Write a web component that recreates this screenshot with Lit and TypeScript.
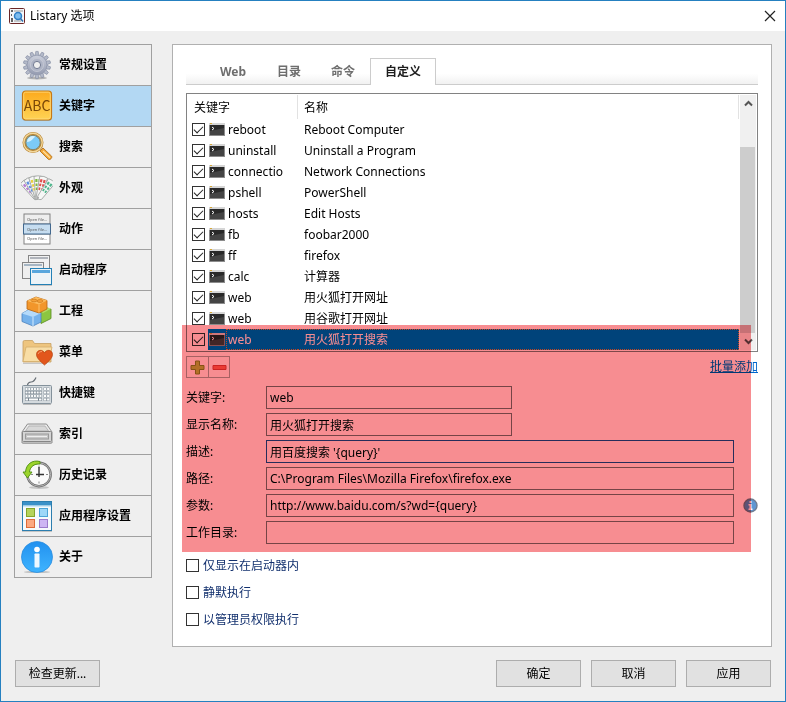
import { LitElement, html, css, svg, nothing, type TemplateResult } from "lit";
import { customElement, property, state } from "lit/decorators.js";
import { classMap } from "lit/directives/class-map.js";

const gearTeeth = Array.from({ length: 14 }, (_, i) => (i * 360) / 14);

const icons: Record<string, TemplateResult> = {
  gear: svg`
    <defs><linearGradient id="g" x1="0" y1="0" x2="0" y2="1"><stop offset="0" stop-color="#ccd0dc"/><stop offset="1" stop-color="#949bb0"/></linearGradient></defs>
    <ellipse cx="16" cy="29" rx="10" ry="1.5" fill="#888" opacity=".6"/>
    ${gearTeeth.map((a) => svg`<path d="M14.8 2.400h2.400l.7 4h-3.800z" fill="#b4bac9" stroke="#8189a0" stroke-width=".6" transform="rotate(${a} 16 16)"/>`)}
    <circle cx="16" cy="16" r="9.800" fill="url(#g)" stroke="#8f96ab" stroke-width=".6"/>
    <circle cx="16" cy="16" r="6.5" fill="#adb3c4" stroke="#c9ccd7" stroke-width=".8"/>
    <circle cx="16" cy="16" r="3.600" fill="#efefef" stroke="#747c93" stroke-width="1"/>`,
  abc: svg`
    <defs><linearGradient id="a" x1="0" y1="0" x2="0" y2="1"><stop offset="0" stop-color="#fca91c"/><stop offset="1" stop-color="#ffd455"/></linearGradient></defs>
    <rect x="1.5" y="2" width="29" height="29" rx="3" fill="#7d96aa" opacity=".6"/>
    <rect x="1.5" y="1" width="29" height="29" rx="3" fill="url(#a)" stroke="#c67a17" stroke-width="1.2"/>
    <rect x="2.7" y="2.2" width="26.6" height="26.6" rx="2" fill="none" stroke="#ffd97c" stroke-width=".8"/>
    <text x="16" y="21" text-anchor="middle" class="abc">ABC</text>`,
  search: svg`
    <path d="M19 20l3-3 8.6 8.2c1 1.4-1.6 4.2-3.2 3.2z" fill="#f3a737" stroke="#b2731d" stroke-width=".9"/>
    <path d="M22 20l7 6.8" stroke="#ffe0a0" stroke-width="1.2"/>
    <circle cx="12" cy="11.5" r="9" fill="#8fd3fa" stroke="#b88534" stroke-width="3"/>
    <circle cx="12" cy="11.5" r="9.2" fill="none" stroke="#f3d79a" stroke-width="1.4"/>
    <circle cx="12" cy="11.5" r="7.2" fill="#7ccaf7" stroke="#86703f" stroke-width=".8"/>
    <path d="M6 11a6 6 0 0 1 8.500-5.400C12 7 11 11 6 11z" fill="#d4f1ff"/>`,
  look: svg`
    ${[
      [-38, "#b77bd6"],
      [-26, "#5d8fe0"],
      [-13, "#e9cf3c"],
      [0, "#7fb93e"],
      [14, "#e0504e"],
      [36, "#4fb58c"],
    ].map(
      ([a, c]) => svg`<g transform="rotate(${a} 17 28)">
        <path d="M13 4.500q4-1.500 8 0l-1.500 21q-2.500 3-5 0z" fill="#f6f7f6" stroke="#9da19f" stroke-width=".8"/>
        <path d="M14.300 7h2.200v3h-2.200zM17.500 7h2.200v3h-2.200zM14.500 11.500h2v2.500h-2zM17.500 11.500h2v2.500h-2zM14.800 15.500h1.700v2.500h-1.700zM17.500 15.500h1.700v2.500h-1.700z" fill="${c}"/></g>`,
    )}
    <circle cx="17" cy="25.500" r="1" fill="#aaa"/>`,
  action: svg`
    <rect x="3" y="1" width="26" height="10" fill="#eee" stroke="#828282"/>
    <rect x="3" y="21" width="26" height="10" fill="#fff" stroke="#828282"/>
    <rect x="2.500" y="11" width="27" height="10" fill="#c6ddf0" stroke="#42688e"/>
    ${[8, 18, 27].map((y) => svg`<text x="6" y="${y}" class="tiny">Open file…</text>`)}`,
  launcher: svg`
    <rect x="7.500" y="1.500" width="21" height="16" fill="#f1f1f1" stroke="#858585"/><path d="M9 3h18v2H9z" fill="#b0b4bb"/>
    <rect x="1.500" y="8.500" width="21" height="16" fill="#eee" stroke="#858585"/><path d="M3 10h18v2H3z" fill="#a6b6c4"/>
    <rect x="9.500" y="14.500" width="21" height="16" fill="#edf3f7" stroke="#2380b6"/><path d="M11 16h18v3H11z" fill="#58a6dd"/>
    <path d="M9 31.500h22" stroke="#999" opacity=".5"/>`,
  bricks: svg`
    <path d="M19 17l11-3v9.500l-10 5z" fill="#8cc641" stroke="#558c1d" stroke-width=".8"/><path d="M17 14l7-3 6 3-8 4z" fill="#b2db66"/>
    <path d="M1 18.500l7-4 12 3.500v9l-8 4-11-4.500z" fill="#76b2eb" stroke="#4b82be" stroke-width=".8"/>
    <path d="M1 18.500l7-4 12 3.500-8 4z" fill="#b5dafa"/><path d="M12 22v9" stroke="#d4eafd"/>
    <path d="M6 6l9-4 11 3.500v8.500l-8 4-12-4z" fill="#f2962b" stroke="#b96612" stroke-width=".8"/>
    <path d="M6 6l9-4 11 3.500-8 4z" fill="#fdbd5f"/><path d="M18 9.500v8" stroke="#fbc271"/>
    <ellipse cx="13" cy="5.500" rx="3" ry="1.400" fill="#f7a23a" stroke="#c87518" stroke-width=".7"/><ellipse cx="19" cy="6" rx="3" ry="1.400" fill="#f7a23a" stroke="#c87518" stroke-width=".7"/>`,
  menu: svg`
    <path d="M2 26V6q0-1.500 1.500-1.500h8l2 3H30V26z" fill="#eec57f" stroke="#c6a062" stroke-width=".8"/>
    <path d="M5 11h26l-3 14.500H2z" fill="#f8dda5" stroke="#d3ad6c" stroke-width=".8"/><path d="M2 27.500h24" stroke="#aaa" opacity=".6"/>
    <path d="M23.500 29C19 25 15.500 22 15.500 18.500c0-5 6.500-5.500 8-1.500 1.500-4 8-3.500 8 1.500 0 3.500-3.500 6.500-8 10.500z" fill="#e2561c" stroke="#b5420f" stroke-width=".7"/>
    <path d="M17 18q1-3 4-2.500" stroke="#f79a68" fill="none"/>`,
  keyboard: svg`
    <path d="M6.500 8q.500-3 3.500-3t5-4.500" fill="none" stroke="#666d74" stroke-width="1.200"/>
    <path d="M2 27.500h28" stroke="#999" opacity=".6"/>
    <rect x="1.500" y="8.500" width="29" height="18" rx="1" fill="#d4dade" stroke="#84919b"/>
    <path d="M4 12h17M4 15.500h17M4 19h17M4 22.500h17" stroke="#7d8993" stroke-width="2.800"/>
    <path d="M4.500 12h16M4.500 15.500h16M4.500 19h16" stroke="#fbfcfc" stroke-width="2" stroke-dasharray="2 .800"/>
    <path d="M4.500 22.500h2.500M8 22.500h9M18 22.500h2.500" stroke="#fbfcfc" stroke-width="2"/>
    <path d="M22.500 12h6M22.500 15.500h6M22.500 19h6M22.500 22.500h6" stroke="#8f9aa3" stroke-width="2.800"/>
    <path d="M23 12h5.500M23 15.500h5.500M23 19h5.500M23 22.500h5.500" stroke="#fbfcfc" stroke-width="1.900" stroke-dasharray="2.200 .900"/>`,
  drive: svg`
    <path d="M6.500 6h19L31 14v11H1V14z" fill="#e9e9e9" stroke="#8e8e8e"/>
    <path d="M8 8h16l3.500 5h-23z" fill="#d8d8d8" stroke="#a5a5a5" stroke-width=".700"/>
    <rect x="1.500" y="13.500" width="29" height="10" rx="1" fill="#d5d5d5" stroke="#858585"/>
    <rect x="4.500" y="16" width="23" height="5" fill="#c7c7c7" stroke="#9a9a9a"/><path d="M6 18.500h20" stroke="#eee"/>
    <path d="M2 25.500h28" stroke="#999" opacity=".6"/>`,
  history: svg`
    <ellipse cx="18" cy="28.500" rx="10" ry="1.500" fill="#999" opacity=".5"/>
    <circle cx="18" cy="15.500" r="11.700" fill="#fafafa" stroke="#6f6f6f" stroke-width="2.400"/>
    <circle cx="18" cy="15.500" r="11.700" fill="none" stroke="#b9b9b9" stroke-width=".900"/>
    <path d="M18 6.500v2M18 22.500v2M25 15.500h2M10 15.500h2" stroke="#888"/>
    <path d="M18 8v10M15 15.500h8" stroke="#333" stroke-width="1.400"/>
    <path d="M19 2.500C11 .500 5 5.500 4.500 13H2l4.500 6 4.500-6H8.500C9 8 13 4.500 19 5z" fill="#9cd42c" stroke="#4f8e12" stroke-width=".900"/>`,
  apps: svg`
    <rect x="1.500" y="1.500" width="29" height="29" fill="#f6fafc" stroke="#2c7eaf"/>
    <path d="M2 2h28v3.500H2z" fill="#3b91c8"/><path d="M2 6h28" stroke="#a9d3eb"/>
    <rect x="5.500" y="8.500" width="8" height="8" fill="#b5d35b" stroke="#86a52b"/>
    <rect x="18.500" y="8.500" width="8" height="8" fill="#9dd7f8" stroke="#4ca4d7"/>
    <rect x="5.500" y="19.500" width="8" height="8" fill="#fca981" stroke="#de6c39"/>
    <rect x="18.500" y="19.500" width="8" height="8" fill="#cdb6f3" stroke="#9b7bcb"/>
    <path d="M1 31.500h30" stroke="#999" opacity=".5"/>`,
  about: svg`
    <defs><linearGradient id="i" x1="0" y1="0" x2="0" y2="1"><stop offset="0" stop-color="#2291ef"/><stop offset="1" stop-color="#3fb4ff"/></linearGradient></defs>
    <ellipse cx="16" cy="31" rx="13" ry="1" fill="#999" opacity=".6"/>
    <circle cx="16" cy="16" r="15.500" fill="url(#i)" stroke="#2c8ee0" stroke-width=".800"/>
    <circle cx="16" cy="8.500" r="2.800" fill="#fff"/><rect x="13.500" y="12.500" width="5" height="14" rx=".8" fill="#eef8ff"/>`,
};

const sections: [string, string][] = [
  ["gear", "常规设置"],
  ["abc", "关键字"],
  ["search", "搜索"],
  ["look", "外观"],
  ["action", "动作"],
  ["launcher", "启动程序"],
  ["bricks", "工程"],
  ["menu", "菜单"],
  ["keyboard", "快捷键"],
  ["drive", "索引"],
  ["history", "历史记录"],
  ["apps", "应用程序设置"],
  ["about", "关于"],
];

const commands: [string, string][] = [
  ["reboot", "Reboot Computer"],
  ["uninstall", "Uninstall a Program"],
  ["connectio", "Network Connections"],
  ["pshell", "PowerShell"],
  ["hosts", "Edit Hosts"],
  ["fb", "foobar2000"],
  ["ff", "firefox"],
  ["calc", "计算器"],
  ["web", "用火狐打开网址"],
  ["web", "用谷歌打开网址"],
  ["web", "用火狐打开搜索"],
];

const base = css`
  *,
  *::before,
  *::after {
    box-sizing: border-box;
  }
  button,
  input {
    font: inherit;
    color: inherit;
    margin: 0;
    padding: 0;
    border-radius: 0;
  }
  svg {
    display: block;
    flex: none;
  }
  .tick {
    appearance: none;
    display: block;
    flex: none;
    width: 13px;
    height: 13px;
    border: 1px solid #333;
    background: #fff;
  }
  .tick:checked {
    display: grid;
    place-items: center;
  }
  .tick:checked::after {
    content: "";
    width: 9px;
    height: 5px;
    margin-bottom: 3px;
    border: solid #222;
    border-width: 0 0 1px 1px;
    transform: rotate(-45deg);
  }
`;

@customElement("section-list")
class SectionList extends LitElement {
  @state() current = 1;

  static styles = [
    base,
    css`
      :host {
        display: block;
        flex: none;
      }
      .list {
        display: flex;
        flex-direction: column;
        width: 138px;
        border: 1px solid #a0a0a0;
      }
      .item {
        display: flex;
        align-items: center;
        gap: 6px;
        height: 41px;
        padding: 0 6px;
        border: 0;
        border-bottom: 1px solid #a0a0a0;
        background: none;
        font-weight: 700;
        text-align: left;
      }
      .item:last-child {
        height: 40px;
        border-bottom: 0;
      }
      .item.active {
        background: #b3d8f3;
      }
      .abc {
        font: 14px "Noto Sans CJK SC", sans-serif;
        fill: #7a4808;
      }
      .tiny {
        font: 4px "Noto Sans", sans-serif;
        fill: #555;
      }
    `,
  ];

  render() {
    return html`<nav class="list">
      ${sections.map(
        ([icon, label], i) => html`<button
          class=${classMap({ item: true, active: i === this.current })}
          @click=${() => (this.current = i)}
        >
          <svg width="32" height="32" viewBox="0 0 32 32" fill="none">${icons[icon]}</svg>
          ${label}
        </button>`,
      )}
    </nav>`;
  }
}

@customElement("command-table")
class CommandTable extends LitElement {
  @state() selected = 10;

  static styles = [
    base,
    css`
      :host {
        display: flex;
        gap: 1px;
        padding: 1px;
        border: 1px solid #828282;
        background: #fff;
      }
      .grid {
        flex: 1;
        min-width: 0;
        table-layout: fixed;
        border-collapse: separate;
        border-spacing: 0;
        line-height: 19px;
      }
      .c-check {
        width: 20px;
      }
      .c-icon {
        width: 18px;
      }
      .c-key {
        width: 72px;
      }
      th {
        height: 24px;
        padding: 0 6px;
        border-right: 1px solid #e2e2e2;
        font-weight: 400;
        text-align: left;
      }
      td {
        height: 21px;
        padding: 0;
        overflow: hidden;
        white-space: nowrap;
      }
      .check {
        padding-left: 4px;
      }
      .icon {
        padding-left: 1px;
      }
      .key,
      .name {
        border: 1px solid transparent;
        border-width: 1px 0;
      }
      .key {
        border-left-width: 1px;
        padding-left: 1px;
      }
      .name {
        border-right-width: 1px;
        padding-left: 6px;
      }
      .selected .icon,
      .selected .key,
      .selected .name {
        background: #0078d7;
        color: #fff;
      }
      .selected .key,
      .selected .name {
        border-style: dotted;
        border-color: #c8803c;
      }
      .bar {
        display: flex;
        flex-direction: column;
        align-items: center;
        width: 16px;
        background: #f0f0f0;
      }
      .arrow {
        display: grid;
        place-items: center;
        width: 100%;
        height: 17px;
        border: 0;
        background: none;
      }
      .track {
        flex: 1;
        width: 100%;
        display: flex;
        flex-direction: column;
        justify-content: flex-end;
        padding-right: 1px;
      }
      .thumb {
        height: 84%;
        background: #cdcdcd;
      }
    `,
  ];

  render() {
    return html`<table class="grid">
        <colgroup>
          <col class="c-check" />
          <col class="c-icon" />
          <col class="c-key" />
          <col />
        </colgroup>
        <thead>
          <tr>
            <th colspan="3">关键字</th>
            <th>名称</th>
          </tr>
        </thead>
        <tbody>
          ${commands.map(
            ([key, name], i) => html`<tr
              class=${classMap({ selected: i === this.selected })}
              @click=${() => (this.selected = i)}
            >
              <td class="check"><input class="tick" type="checkbox" checked aria-label=${key} /></td>
              <td class="icon">
                <svg width="16" height="16" viewBox="0 0 16 16">
                  <path d="M0 1h16v13H0z" fill="#8c8c8c" />
                  <path d="M0 1h16v2H0z" fill="#d6d6d6" />
                  <path d="M1 1h2v1H1z" fill="#d6a83a" />
                  <path d="M1 3h14v10H1z" fill="#292929" />
                  <path d="M1 9l14-3v7H1z" fill="#444" />
                  <path d="M3 5l2 1.500L3 8" stroke="#fff" fill="none" />
                </svg>
              </td>
              <td class="key">${key}</td>
              <td class="name">${name}</td>
            </tr>`,
          )}
        </tbody>
      </table>
      <div class="bar">
        <button class="arrow" aria-label="上">
          <svg width="9" height="7" viewBox="0 0 9 7"><path d="M1 5.500l3.500-3.500L8 5.500" stroke="#555" stroke-width="2" fill="none" /></svg>
        </button>
        <div class="track"><div class="thumb"></div></div>
        <button class="arrow" aria-label="下">
          <svg width="9" height="7" viewBox="0 0 9 7"><path d="M1 1.500L4.500 5 8 1.500" stroke="#555" stroke-width="2" fill="none" /></svg>
        </button>
      </div>`;
  }
}

interface Field {
  id: string;
  label: string;
  value: string;
  short?: boolean;
  focus?: boolean;
  info?: boolean;
}

const fields: Field[] = [
  { id: "keyword", label: "关键字:", value: "web", short: true },
  { id: "title", label: "显示名称:", value: "用火狐打开搜索", short: true },
  { id: "desc", label: "描述:", value: "用百度搜索 '{query}'", focus: true },
  { id: "path", label: "路径:", value: "C:\\Program Files\\Mozilla Firefox\\firefox.exe" },
  { id: "args", label: "参数:", value: "http://www.baidu.com/s?wd={query}", info: true },
  { id: "dir", label: "工作目录:", value: "" },
];

@customElement("keyword-panel")
class KeywordPanel extends LitElement {
  @property({ type: Number }) tab = 3;

  static styles = [
    base,
    css`
      :host {
        display: block;
        position: relative;
        flex: 1;
        min-width: 0;
        padding: 13px 13px 16px;
        border: 1px solid #b0b0b0;
        background: #fff;
      }
      .tabs {
        display: flex;
        height: 27px;
        padding-left: 18px;
        border-bottom: 1px solid #ccc;
        background: linear-gradient(#fff 60%, #f1f1f1);
        color: #6e6e6e;
      }
      .tab {
        min-width: 54px;
        height: 27px;
        padding: 0 15px;
        border: 0;
        background: none;
        font-weight: 700;
      }
      .tab:first-child {
        min-width: 58px;
      }
      .tab.active {
        padding: 0 14px;
        border: 1px solid #ccc;
        border-bottom: 0;
        background: #fff;
        color: #1e1e1e;
      }
      .table {
        margin-top: 8px;
      }
      .tools {
        display: flex;
        justify-content: space-between;
        align-items: center;
        margin-top: 4px;
      }
      .pair {
        display: flex;
        border: 1px solid #adadad;
      }
      .tool {
        display: grid;
        place-items: center;
        width: 21px;
        height: 20px;
        border: 0;
        background: #fff;
      }
      .tool + .tool {
        border-left: 1px solid #adadad;
      }
      .link {
        color: #0066cc;
      }
      .form {
        display: grid;
        gap: 4px;
        margin-top: 8px;
      }
      .row {
        display: grid;
        grid-template-columns: 80px 1fr 24px;
        align-items: center;
        height: 23px;
      }
      .box {
        width: 100%;
        height: 23px;
        padding: 0 3px;
        border: 1px solid #7a7a7a;
        background: #fff;
        outline: none;
      }
      .box.short {
        width: 246px;
      }
      .box.focus {
        border-color: #2850a0;
      }
      .info {
        justify-self: end;
      }
      .options {
        display: grid;
        gap: 8px;
        margin-top: 12px;
        color: #12306e;
      }
      .option {
        display: flex;
        align-items: center;
        gap: 4px;
        height: 19px;
      }
      .marker {
        position: absolute;
        top: 280px;
        left: 9px;
        right: 20px;
        height: 227px;
        background: #f78d91;
        mix-blend-mode: multiply;
        pointer-events: none;
      }
    `,
  ];

  render() {
    return html`<div class="tabs" role="tablist">
        ${["Web", "目录", "命令", "自定义"].map(
          (t, i) => html`<button
            role="tab"
            class=${classMap({ tab: true, active: i === this.tab })}
            @click=${() => (this.tab = i)}
          >${t}</button>`,
        )}
      </div>
      <command-table class="table"></command-table>
      <div class="tools">
        <div class="pair">
          <button class="tool" aria-label="添加">
            <svg width="15" height="15" viewBox="0 0 15 15"><path d="M5.500 1h4v4.500H14v4H9.500V14h-4V9.500H1v-4h4.500z" fill="#b9c844" stroke="#8a9224" /></svg>
          </button>
          <button class="tool" aria-label="删除">
            <svg width="15" height="15" viewBox="0 0 15 15"><path d="M1 5.500h13v4H1z" fill="#f2695a" stroke="#d23c3c" /></svg>
          </button>
        </div>
        <a class="link" href="#">批量添加</a>
      </div>
      <div class="form">
        ${fields.map(
          (f) => html`<div class="row">
            <label for=${f.id}>${f.label}</label>
            <input
              id=${f.id}
              type="text"
              class=${classMap({ box: true, short: !!f.short, focus: !!f.focus })}
              .value=${f.value}
            />
            ${f.info
              ? html`<svg class="info" width="15" height="15" viewBox="0 0 15 15">
                  <circle cx="7.500" cy="7.500" r="6.500" fill="#5f96d2" stroke="#6f7d92" stroke-width="1.400" />
                  <path d="M6.500 3h2v2h-2zM5.500 6h3v4.500h1V12h-4v-1.500h1v-3h-1z" fill="#fff" />
                </svg>`
              : nothing}
          </div>`,
        )}
      </div>
      <div class="options">
        ${["仅显示在启动器内", "静默执行", "以管理员权限执行"].map(
          (o) => html`<label class="option"><input class="tick" type="checkbox" />${o}</label>`,
        )}
      </div>
      <div class="marker"></div>`;
  }
}

@customElement("app-root")
class AppRoot extends LitElement {
  static styles = [
    base,
    css`
      :host {
        display: flex;
        flex-direction: column;
        box-sizing: border-box;
        min-height: 100vh;
        border: 1px solid #2580c0;
        background: #efefef;
        color: #000;
        font: 12px/16px "Noto Sans", "Noto Sans CJK SC", sans-serif;
      }
      .title {
        display: flex;
        align-items: center;
        gap: 5px;
        height: 30px;
        padding: 0 9px 0 8px;
        background: #fff;
      }
      .name {
        flex: 1;
      }
      .close {
        border: 0;
        background: none;
      }
      .body {
        flex: 1;
        display: flex;
        align-items: stretch;
        gap: 20px;
        padding: 13px 13px 0;
      }
      .footer {
        display: flex;
        gap: 10px;
        padding: 13px 14px 14px;
      }
      .push {
        width: 85px;
        height: 27px;
        border: 1px solid #adadad;
        background: #e1e1e1;
      }
      .push.first {
        margin-right: auto;
      }
    `,
  ];

  render() {
    return html`<header class="title">
        <svg width="16" height="16" viewBox="0 0 16 16" fill="none">
          <rect x=".5" y=".5" width="15" height="15" rx="1" fill="#f4f7fa" stroke="#6b2626" />
          <path d="M2 3h2M2 7h1M2 11h2M2 13h2" stroke="#333" stroke-width="1.500" />
          <path d="M5 3h9M5 13h7" stroke="#9a9a9a" />
          <circle cx="9" cy="8" r="3.500" fill="#7dbdf0" stroke="#2f7fc6" stroke-width="1.500" />
          <path d="M11.500 10.500l2.500 3" stroke="#2f6fae" stroke-width="1.500" />
        </svg>
        <span class="name">Listary 选项</span>
        <button class="close" aria-label="关闭">
          <svg width="12" height="12" viewBox="0 0 12 12"><path d="M1 1l10 10M11 1L1 11" stroke="#222" stroke-width="1.200" /></svg>
        </button>
      </header>
      <main class="body">
        <section-list></section-list>
        <keyword-panel></keyword-panel>
      </main>
      <footer class="footer">
        <button class="push first">检查更新...</button>
        <button class="push">确定</button>
        <button class="push">取消</button>
        <button class="push">应用</button>
      </footer>`;
  }
}
